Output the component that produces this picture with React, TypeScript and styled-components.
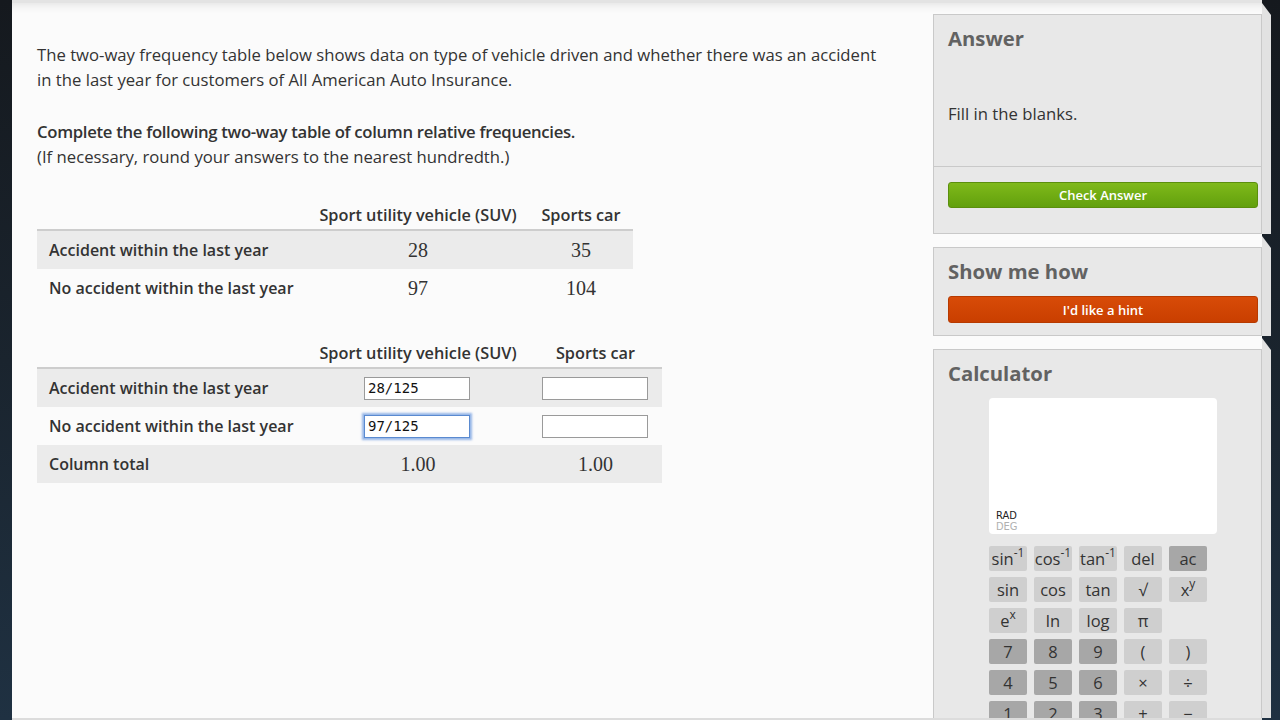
import React from "react";
import styled, { createGlobalStyle } from "styled-components";

const Global = createGlobalStyle`
  html, body { margin: 0; padding: 0; width: 1280px; height: 720px; overflow: hidden; }
  body { font-family: "Open Sans", Lato, sans-serif; color: #333; }
  * { box-sizing: border-box; }
`;

const Shell = styled.div`
  width: 1280px;
  height: 720px;
  display: flex;
  padding-left: 12px;
  overflow: hidden;
  background: linear-gradient(180deg, #15191e 0%, #1a242e 50%, #1f3142 100%);
`;

const Page = styled.div`
  width: 1250px;
  height: 720px;
  display: flex;
  background: #fbfbfb;
  border-top: 3px solid #e3e3e3;
  border-bottom: 2px solid #dcdcdc;
  box-shadow: inset 0 10px 10px -8px rgba(0, 0, 0, 0.1);
`;

const Main = styled.main`
  width: 921px;
  flex: none;
  padding: 39px 45px 0 25px;
`;

const Para = styled.p<{ $bold?: boolean }>`
  margin: 0;
  font-size: 16.7px;
  line-height: 25px;
  color: #333;
  font-weight: ${(p) => (p.$bold ? 600 : 400)};
  letter-spacing: ${(p) => (p.$bold ? "-0.3px" : "0")};
`;

const Block = styled.div`
  margin-bottom: 27px;
`;

const Table = styled.div<{ $cols: string; $top: number }>`
  display: grid;
  grid-template-columns: ${(p) => p.$cols};
  margin-top: ${(p) => p.$top}px;
  width: max-content;
`;

const HeadCell = styled.div`
  height: 30px;
  line-height: 28px;
  font-size: 16.3px;
  font-weight: 600;
  color: #333;
  text-align: center;
  white-space: nowrap;
  border-bottom: 2px solid #cdcdcd;
`;

const LabelCell = styled.div<{ $shade?: boolean }>`
  height: 38px;
  display: flex;
  align-items: center;
  padding-left: 12px;
  font-size: 16px;
  font-weight: 600;
  color: #333;
  white-space: nowrap;
  background: ${(p) => (p.$shade ? "#ebebeb" : "transparent")};
`;

const ValueCell = styled.div<{ $shade?: boolean }>`
  height: 38px;
  display: flex;
  align-items: center;
  justify-content: center;
  font-family: "Liberation Serif", "DejaVu Serif", serif;
  font-size: 20px;
  color: #333;
  background: ${(p) => (p.$shade ? "#ebebeb" : "transparent")};
`;

const Input = styled.input<{ $focus?: boolean }>`
  width: 106px;
  height: 23px;
  margin-left: -2px;
  padding: 0 3px;
  font-family: "DejaVu Sans Mono", "Liberation Mono", monospace;
  font-size: 14px;
  color: #111;
  background: #fff;
  border: 1px solid ${(p) => (p.$focus ? "#5a8ad0" : "#9a9a9a")};
  border-radius: 0;
  outline: none;
  box-shadow: ${(p) => (p.$focus ? "0 0 2px 2px rgba(95, 145, 220, 0.65)" : "none")};
`;

const Sidebar = styled.aside`
  width: 338px;
  flex: none;
  margin-right: -9px;
  padding-top: 11px;
  display: flex;
  flex-direction: column;
  gap: 13px;
  overflow: hidden;
`;

const Panel = styled.section`
  position: relative;
  width: 329px;
  flex: none;
  background: #e8e8e8;
  border: 1px solid #c9c9c9;
  &::after {
    content: "";
    position: absolute;
    top: -12px;
    bottom: -1px;
    right: -10px;
    width: 9px;
    background: #e2e2e2;
    clip-path: polygon(0 0, 100% 12px, 100% 100%, 0 100%);
  }
`;

const PanelSection = styled.div<{ $pad: string; $divider?: boolean }>`
  padding: ${(p) => p.$pad};
  border-bottom: ${(p) => (p.$divider ? "1px solid #c9c9c9" : "none")};
`;

const PanelTitle = styled.h2`
  margin: 0;
  font-size: 20.3px;
  line-height: 26px;
  font-weight: 700;
  color: #626262;
`;

const Hint = styled.p`
  margin: 52px 0 0;
  font-size: 16.7px;
  line-height: 22px;
  color: #333;
`;

const ActionButton = styled.button<{ $tone: "green" | "orange" }>`
  display: block;
  width: 310px;
  height: ${(p) => (p.$tone === "green" ? 26 : 27)}px;
  margin-top: ${(p) => (p.$tone === "green" ? 0 : 12)}px;
  border-radius: 3px;
  border: 1px solid ${(p) => (p.$tone === "green" ? "#5b8f0d" : "#b73a00")};
  background: ${(p) =>
    p.$tone === "green"
      ? "linear-gradient(180deg, #7fb91a 0%, #62a00d 100%)"
      : "linear-gradient(180deg, #d84b08 0%, #c93f00 100%)"};
  color: #fff;
  font-family: "Open Sans", sans-serif;
  font-size: 13px;
  font-weight: 600;
  cursor: pointer;
`;

const CalcBody = styled.div`
  padding: 0 0 0 55px;
`;

const Display = styled.div`
  width: 228px;
  height: 136px;
  margin: 12px 0 12px;
  background: #fff;
  border-radius: 4px;
  display: flex;
  flex-direction: column;
  justify-content: flex-end;
  padding: 0 0 2px 7px;
`;

const Mode = styled.span<{ $active?: boolean }>`
  font-family: "DejaVu Sans Condensed", "Liberation Sans Narrow", sans-serif;
  font-size: 11px;
  line-height: 11px;
  color: ${(p) => (p.$active ? "#222" : "#b0b0b0")};
`;

const Keys = styled.div`
  display: grid;
  grid-template-columns: repeat(5, 38px);
  grid-auto-rows: 25px;
  column-gap: 7px;
  row-gap: 6px;
  padding-bottom: 20px;
`;

const Key = styled.button<{ $tone: "light" | "dark" }>`
  border: none;
  border-radius: 2px;
  padding: 0;
  background: ${(p) => (p.$tone === "dark" ? "#a7a7a7" : "#cfcfcf")};
  color: #333;
  font-family: "Open Sans", sans-serif;
  font-size: 16.5px;
  line-height: 25px;
  white-space: nowrap;
  cursor: pointer;
`;

const Sup = styled.sup`
  font-size: 12px;
  position: relative;
  top: -2px;
  line-height: 0;
`;

const Blank = styled.span``;

type K = { label: React.ReactNode; tone: "light" | "dark" } | null;

const keys: K[] = [
  { label: <>sin<Sup>-1</Sup></>, tone: "light" },
  { label: <>cos<Sup>-1</Sup></>, tone: "light" },
  { label: <>tan<Sup>-1</Sup></>, tone: "light" },
  { label: "del", tone: "light" },
  { label: "ac", tone: "dark" },
  { label: "sin", tone: "light" },
  { label: "cos", tone: "light" },
  { label: "tan", tone: "light" },
  { label: "√", tone: "light" },
  { label: <>x<Sup>y</Sup></>, tone: "light" },
  { label: <>e<Sup>x</Sup></>, tone: "light" },
  { label: "ln", tone: "light" },
  { label: "log", tone: "light" },
  { label: "π", tone: "light" },
  null,
  { label: "7", tone: "dark" },
  { label: "8", tone: "dark" },
  { label: "9", tone: "dark" },
  { label: "(", tone: "light" },
  { label: ")", tone: "light" },
  { label: "4", tone: "dark" },
  { label: "5", tone: "dark" },
  { label: "6", tone: "dark" },
  { label: "×", tone: "light" },
  { label: "÷", tone: "light" },
  { label: "1", tone: "dark" },
  { label: "2", tone: "dark" },
  { label: "3", tone: "dark" },
  { label: "+", tone: "light" },
  { label: "−", tone: "light" },
];

export default function App() {
  return (
    <>
      <Global />
      <Shell>
        <Page>
          <Main>
            <Block>
              <Para>
                The two-way frequency table below shows data on type of vehicle driven and whether there was an accident
                in the last year for customers of All American Auto Insurance.
              </Para>
            </Block>
            <Para $bold>Complete the following two-way table of column relative frequencies.</Para>
            <Para>(If necessary, round your answers to the nearest hundredth.)</Para>

            <Table $cols="270px 222px 104px" $top={32}>
              <HeadCell />
              <HeadCell>Sport utility vehicle (SUV)</HeadCell>
              <HeadCell>Sports car</HeadCell>
              <LabelCell $shade>Accident within the last year</LabelCell>
              <ValueCell $shade>28</ValueCell>
              <ValueCell $shade>35</ValueCell>
              <LabelCell>No accident within the last year</LabelCell>
              <ValueCell>97</ValueCell>
              <ValueCell>104</ValueCell>
            </Table>

            <Table $cols="270px 222px 133px" $top={32}>
              <HeadCell />
              <HeadCell>Sport utility vehicle (SUV)</HeadCell>
              <HeadCell>Sports car</HeadCell>
              <LabelCell $shade>Accident within the last year</LabelCell>
              <ValueCell $shade>
                <Input defaultValue="28/125" />
              </ValueCell>
              <ValueCell $shade>
                <Input defaultValue="" />
              </ValueCell>
              <LabelCell>No accident within the last year</LabelCell>
              <ValueCell>
                <Input $focus defaultValue="97/125" />
              </ValueCell>
              <ValueCell>
                <Input defaultValue="" />
              </ValueCell>
              <LabelCell $shade>Column total</LabelCell>
              <ValueCell $shade>1.00</ValueCell>
              <ValueCell $shade>1.00</ValueCell>
            </Table>
          </Main>

          <Sidebar>
            <Panel>
              <PanelSection $pad="10px 14px 41px" $divider>
                <PanelTitle>Answer</PanelTitle>
                <Hint>Fill in the blanks.</Hint>
              </PanelSection>
              <PanelSection $pad="15px 14px 25px">
                <ActionButton $tone="green">Check Answer</ActionButton>
              </PanelSection>
            </Panel>

            <Panel>
              <PanelSection $pad="10px 14px 12px">
                <PanelTitle>Show me how</PanelTitle>
                <ActionButton $tone="orange">I'd like a hint</ActionButton>
              </PanelSection>
            </Panel>

            <Panel>
              <PanelSection $pad="10px 14px 0">
                <PanelTitle>Calculator</PanelTitle>
              </PanelSection>
              <CalcBody>
                <Display>
                  <Mode $active>RAD</Mode>
                  <Mode>DEG</Mode>
                </Display>
                <Keys>
                  {keys.map((k, i) =>
                    k ? (
                      <Key key={i} $tone={k.tone}>
                        {k.label}
                      </Key>
                    ) : (
                      <Blank key={i} />
                    )
                  )}
                </Keys>
              </CalcBody>
            </Panel>
          </Sidebar>
        </Page>
      </Shell>
    </>
  );
}
